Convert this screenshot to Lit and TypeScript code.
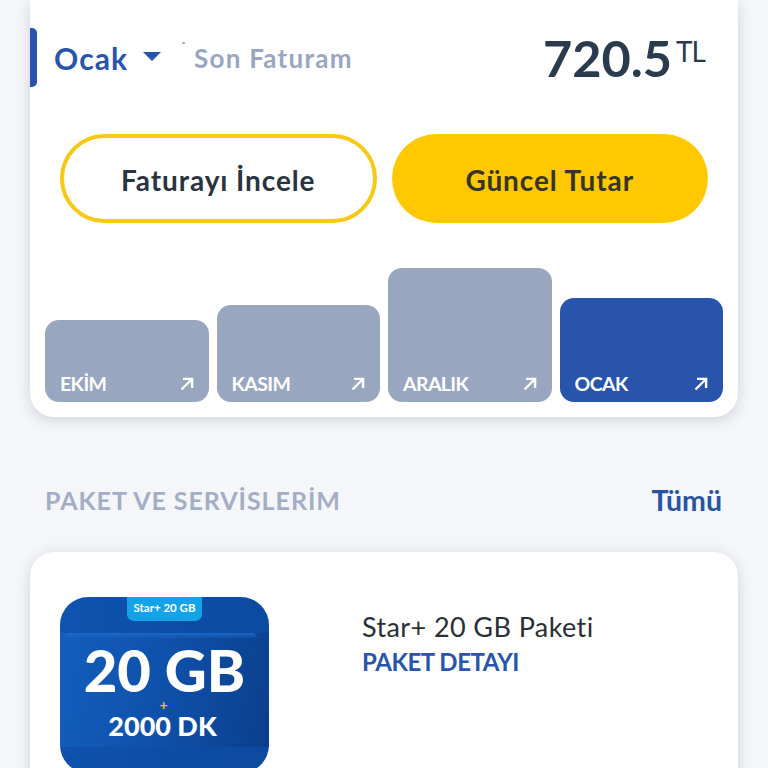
import { LitElement, html, css, svg } from "lit";
import { customElement } from "lit/decorators.js";

const arrow = svg`<svg class="arrow" viewBox="0 0 14 14" width="14" height="14" fill="none" stroke="#fff" stroke-width="2.4"><path d="M1.5 12.5 L12 2 M3 1.9 H12.1 V11"/></svg>`;

const bars = [
  { name: "EKİM", h: 82, on: false },
  { name: "KASIM", h: 97, on: false },
  { name: "ARALIK", h: 134, on: false },
  { name: "OCAK", h: 104, on: true },
];

@customElement("app-root")
export class AppRoot extends LitElement {
  static styles = css`
    :host { display: block; width: 768px; height: 768px; overflow: hidden; background: #f4f6f9; font-family: "Lato", "Liberation Sans", sans-serif; color: #2a3744; }
    * { box-sizing: border-box; }
    .card { margin: 0 30px; background: #fff; box-shadow: 0 3px 14px rgba(60, 70, 90, 0.2); }
    .bill { height: 417px; border-radius: 0 0 24px 24px; padding-top: 28px; position: relative; display: flex; flex-direction: column; }
    .head { height: 59px; display: flex; align-items: center; }
    .mark { width: 7px; height: 59px; background: #2855ab; border-radius: 0 5px 5px 0; }
    .month { margin-left: 17px; width: 74px; font-size: 30px; font-weight: 700; color: #2855ab; letter-spacing: 1.1px; white-space: nowrap; }
    .caret { margin-left: 15px; width: 0; height: 0; border-left: 9px solid transparent; border-right: 9px solid transparent; border-top: 9px solid #2855ab; margin-top: -2px; }
    .speck { position: absolute; left: 152px; top: 42px; width: 3px; height: 2px; background: #aab4c8; }
    .last { margin-left: 33px; font-size: 26px; font-weight: 700; color: #9aa6bf; letter-spacing: 1.25px; }
    .price { margin-left: auto; margin-right: 33px; display: flex; align-items: flex-start; font-weight: 700; font-size: 50.5px; line-height: 61px; color: #2a3b4d; }
    .price sup { font-size: 28px; font-weight: 400; line-height: 28px; margin: 0 0 0 4px; padding-top: 10px; letter-spacing: -1px; }
    .btns { display: grid; grid-template-columns: 1fr 1fr; gap: 15px; margin: 47px 30px 0; }
    .btn { height: 89px; border-radius: 45px; display: flex; align-items: center; justify-content: center; padding-top: 2px; font-size: 28px; font-weight: 700; letter-spacing: 0.9px; color: #2a3340; }
    .outline { border: 4px solid #f6c915; background: #fff; }
    .solid { background: #ffc800; color: #37342a; }
    .chart { margin-top: auto; margin-bottom: 15px; padding: 0 15px; display: flex; align-items: flex-end; gap: 8px; }
    .bar { flex: 1 1 0; background: #98a6bf; border-radius: 14px; display: flex; align-items: flex-end; justify-content: space-between; padding: 0 15px 6px; color: #fff; font-size: 19.5px; font-weight: 700; line-height: 24px; letter-spacing: -0.6px; }
    .bar.on { background: #2855ab; }
    .arrow { margin-bottom: 5px; }
    .sec { display: flex; justify-content: space-between; align-items: center; margin: 65px 46px 0 45px; height: 36px; }
    .sec-t { font-size: 25px; font-weight: 700; color: #a3aec5; letter-spacing: 0.95px; }
    .all { font-size: 28.5px; font-weight: 700; color: #2855a0; }
    .pack { margin-top: 34px; height: 300px; border-radius: 24px; padding: 45px 30px; display: flex; gap: 93px; }
    .img { width: 209px; height: 176px; border-radius: 28px; flex: none; position: relative; overflow: hidden; color: #fff; font-weight: 900; text-align: center; background: linear-gradient(100deg, #0f54b0, #0d4ca5 60%, #0c4a9f); padding-top: 36px; }
    .tab { position: absolute; left: 67px; top: 0; width: 75px; height: 24px; background: #14a3e6; border-radius: 0 0 7px 7px; font-size: 11.5px; font-weight: 700; line-height: 22px; }
    .panel { position: relative; height: 114px; background: linear-gradient(100deg, #125ebe 0%, #0f50a9 50%, #0b3f8c 100%); }
    .panel::before { content: ""; position: absolute; left: 4px; right: 12px; top: 0; height: 6px; border-radius: 5px 5px 0 0; background: linear-gradient(#1b68c6, rgba(27, 104, 198, 0)); }
    .gb { font-size: 58px; line-height: 58px; padding-top: 8px; }
    .plus { font-size: 14px; line-height: 10px; color: #e3b93e; margin-top: 1px; margin-right: 2px; }
    .dk { font-size: 27px; line-height: 32px; margin-right: 4px; }
    .info { padding-top: 12px; }
    .name { font-size: 27px; line-height: 35px; color: #2a2f35; letter-spacing: 0.4px; }
    .detail { font-size: 24px; font-weight: 700; line-height: 32px; color: #2855ab; margin-top: 2px; letter-spacing: -0.45px; }
  `;

  render() {
    return html`
      <div class="card bill">
        <div class="speck"></div>
        <div class="head">
          <div class="mark"></div>
          <div class="month">Ocak</div>
          <div class="caret"></div>
          <div class="last">Son Faturam</div>
          <div class="price">720.5<sup>TL</sup></div>
        </div>
        <div class="btns">
          <div class="btn outline">Faturayı İncele</div>
          <div class="btn solid">Güncel Tutar</div>
        </div>
        <div class="chart">
          ${bars.map(
            (b) => html`<div class="bar ${b.on ? "on" : ""}" style="height:${b.h}px"><span>${b.name}</span>${arrow}</div>`
          )}
        </div>
      </div>
      <div class="sec">
        <div class="sec-t">PAKET VE SERVİSLERİM</div>
        <div class="all">Tümü</div>
      </div>
      <div class="card pack">
        <div class="img">
          <div class="tab">Star+ 20 GB</div>
          <div class="panel">
            <div class="gb">20 GB</div>
            <div class="plus">+</div>
            <div class="dk">2000 DK</div>
          </div>
        </div>
        <div class="info">
          <div class="name">Star+ 20 GB Paketi</div>
          <div class="detail">PAKET DETAYI</div>
        </div>
      </div>
    `;
  }
}
